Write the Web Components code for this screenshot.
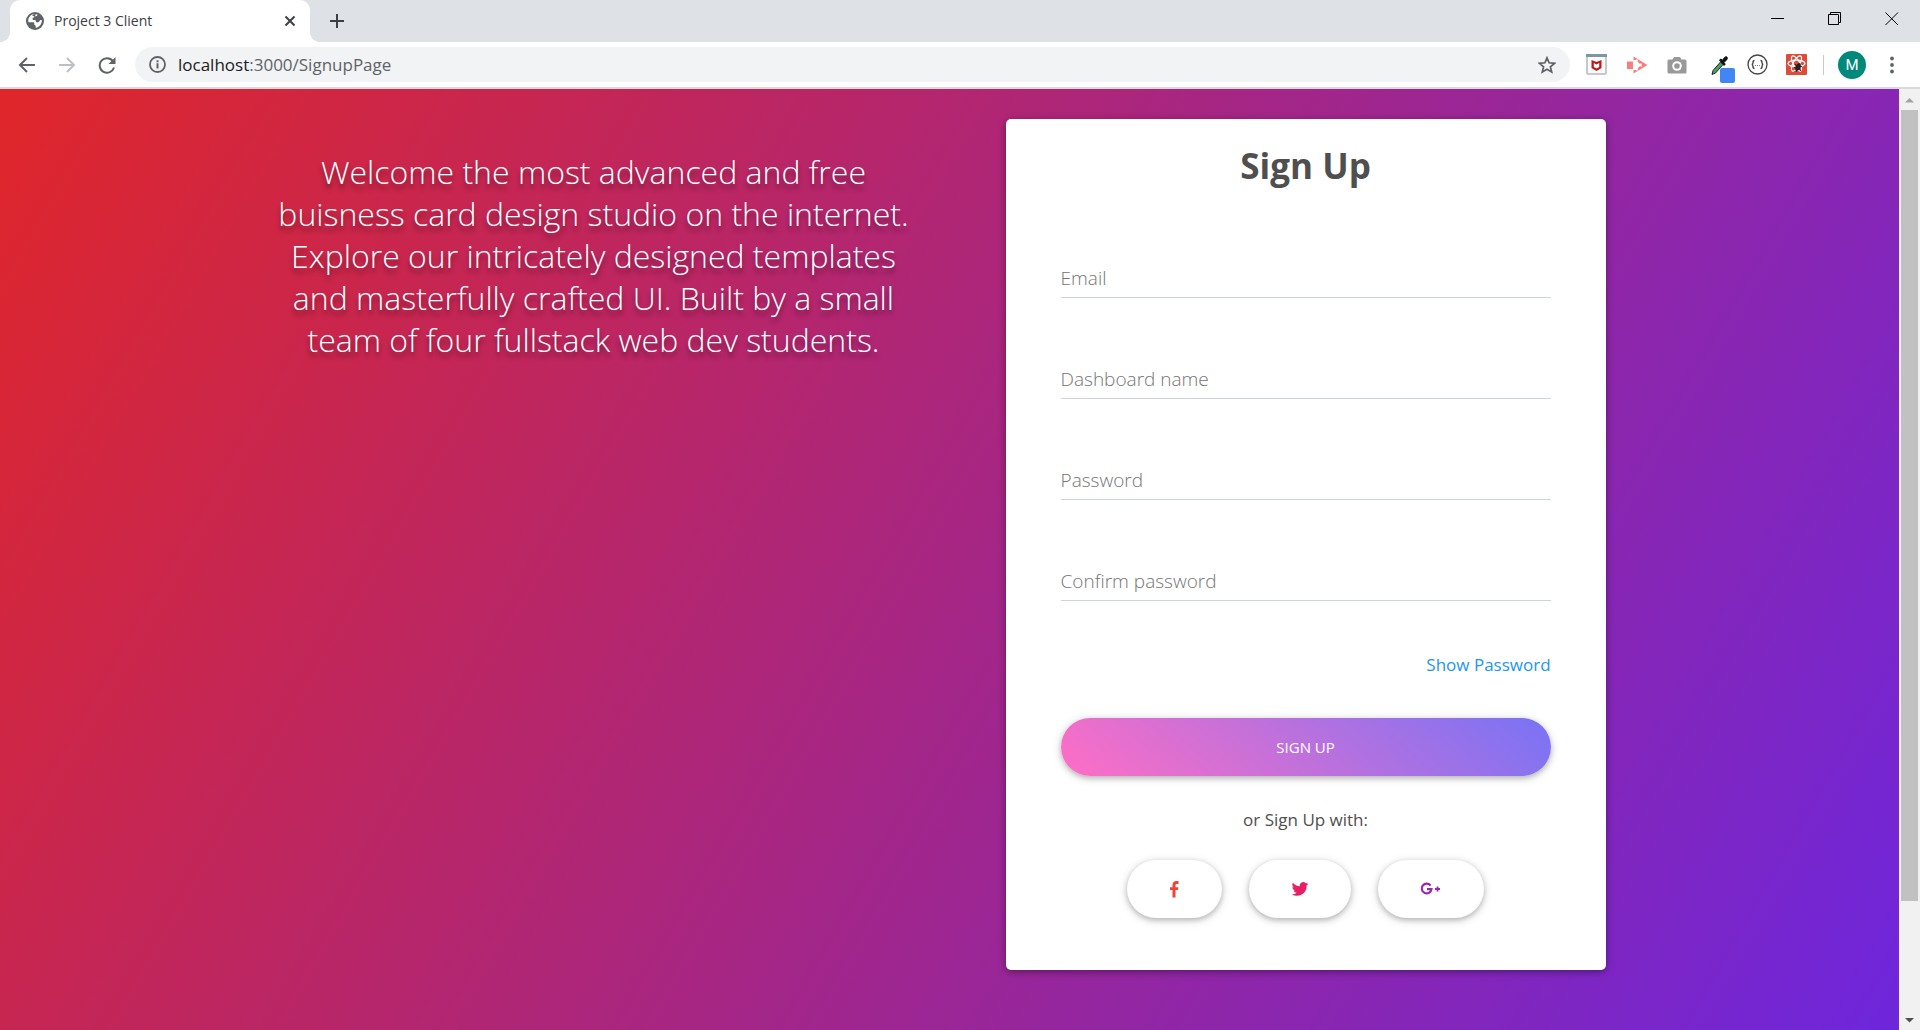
<!DOCTYPE html>
<html lang="en">
<head>
<meta charset="utf-8">
<title>Project 3 Client</title>
<style>
  html, body { margin: 0; height: 100%; }
  body { font-family: "Open Sans", "Noto Sans", sans-serif; overflow: hidden; }
</style>
</head>
<body>
<browser-window>
  <browser-tab slot="tab" title="Project 3 Client"></browser-tab>
  <address-bar slot="toolbar"></address-bar>
  <signup-page>
    <span slot="intro">Welcome the most advanced and free buisness card design studio on the internet. Explore our intricately designed templates and masterfully crafted UI. Built by a small team of four fullstack web dev students.</span>
    <signup-card slot="card" heading="Sign Up">
      <form-field label="Email" type="email"></form-field>
      <form-field label="Dashboard name" type="text"></form-field>
      <form-field label="Password" type="password"></form-field>
      <form-field label="Confirm password" type="password"></form-field>
    </signup-card>
  </signup-page>
</browser-window>

<script>
const define = (name, markup, setup) => customElements.define(name, class extends HTMLElement {
  constructor() {
    super();
    this.attachShadow({ mode: 'open' }).innerHTML = markup;
  }
  connectedCallback() { if (setup) setup(this, this.shadowRoot); }
});

define('browser-window', `
<style>
  :host { display: flex; flex-direction: column; height: 100vh; }
  .strip { display: flex; align-items: stretch; height: 42px; padding-left: 10px; background: #dee1e6; flex: none; }
  .strip button, .caption button { border: 0; padding: 0; background: none; display: grid; place-items: center; }
  .add { width: 54px; height: 42px; }
  .caption { display: flex; margin-left: auto; }
  .caption button { width: 57px; height: 37px; }
  .view { display: flex; flex: 1; min-height: 0; }
  ::slotted(signup-page) { flex: 1; min-width: 0; }
</style>
<div class="strip">
  <slot name="tab"></slot>
  <button class="add" aria-label="New tab"><svg width="16" height="16" viewBox="0 0 16 16" stroke="#3c4043" stroke-width="2"><path d="M8 1v14M1 8h14"/></svg></button>
  <div class="caption">
    <button aria-label="Minimize"><svg width="14" height="14" viewBox="0 0 14 14"><path d="M0 6.500h13" stroke="#000"/></svg></button>
    <button aria-label="Restore"><svg width="14" height="14" viewBox="0 0 14 14" fill="none" stroke="#000"><path d="M.5 2.500h10v10H.5zM2.500 2.500v-2h10v10h-2"/></svg></button>
    <button aria-label="Close"><svg width="14" height="14" viewBox="0 0 14 14" fill="none" stroke="#000"><path d="M.5.5l12.500 12.500M13 .5L.5 13"/></svg></button>
  </div>
</div>
<slot name="toolbar"></slot>
<div class="view"><slot></slot><scroll-track></scroll-track></div>
`);

define('browser-tab', `
<style>
  :host { display: flex; align-items: center; box-sizing: border-box; position: relative; width: 300px; padding: 0 14px 0 16px; background: #fff; border-radius: 10px 10px 0 0; }
  :host::before, :host::after { content: ""; position: absolute; bottom: 0; width: 10px; height: 10px; }
  :host::before { right: 100%; background: radial-gradient(circle at 0 0, transparent 10px, #fff 10px); }
  :host::after { left: 100%; background: radial-gradient(circle at 100% 0, transparent 10px, #fff 10px); }
  span { flex: 1; margin-left: 10px; font-size: 14px; line-height: 20px; color: #3c4043; }
  button { border: 0; padding: 0; background: none; width: 12px; height: 12px; display: block; }
  svg { display: block; }
</style>
<svg width="18" height="18" viewBox="0 0 18 18"><circle cx="9" cy="9" r="9" fill="#5f6368"/><path fill="#fff" d="M11.500 2.500c-.2 1.500-1.400 1.800-3 1.800-.8 0-.6 1.300-1.300 1.700-.8.400-1 .7-.5 1.500.6.900 2 .2 2.700.8.700.7.300 1.700 1.200 2 .9.300 2.800-.2 3-1.300.2-1 1.400-1 2.300-.8-.1 4-2.600 7-6.200 7.700v-1.500c0-.8-.6-1.500-1.400-1.700V11.500c0-.8-.6-1.300-1.400-1.300H2.500c-1-4 1.500-7.300 5-8.200z"/><path fill="#5f6368" d="M6 3.500l2-1.500 2 .5-1.500 2z"/></svg>
<span></span>
<button aria-label="Close tab"><svg width="12" height="12" viewBox="0 0 12 12" stroke="#3c4043" stroke-width="2"><path d="M1.500 1.500l9 9M10.500 1.500l-9 9"/></svg></button>
`, (el, root) => { root.querySelector('span').textContent = el.title; });

define('address-bar', `
<style>
  :host { display: flex; align-items: center; flex: none; box-sizing: border-box; height: 47px; padding: 0 15px 0 12px; background: #fff; border-bottom: 2px solid #d8dade; }
  button { border: 0; padding: 0; background: none; display: grid; place-items: center; flex: none; }
  svg { display: block; }
  .nav { display: flex; gap: 10px; margin-right: 13px; }
  .nav button { width: 30px; height: 30px; }
  .omni { display: flex; align-items: center; flex: 1; height: 35px; border-radius: 18px; background: #f1f3f4; padding: 0 14px; box-sizing: border-box; }
  .url { flex: 1; margin-left: 12px; font-size: 17px; line-height: 24px; color: #5f6368; }
  .url b { font-weight: 400; color: #202124; }
  .ext { display: flex; align-items: center; gap: 18px; margin-left: 16px; }
  .ext button { width: 22px; height: 36px; }
  .sep { width: 1px; height: 20px; background: #c8cacd; margin-left: 15px; }
  .avatar { width: 28px; height: 28px; border-radius: 50%; background: #00897b; color: #fff; font: 15px/28px Roboto, sans-serif; margin: 0 13px 0 14px; }
  .menu { width: 26px; height: 30px; }
</style>
<div class="nav">
  <button aria-label="Back"><svg width="18" height="18" viewBox="0 0 18 18" fill="none" stroke="#5f6368" stroke-width="2"><path d="M17 9H2M9 2L2 9l7 7"/></svg></button>
  <button aria-label="Forward"><svg width="18" height="18" viewBox="0 0 18 18" fill="none" stroke="#bdc1c6" stroke-width="2"><path d="M1 9h15M9 2l7 7-7 7"/></svg></button>
  <button aria-label="Reload"><svg width="20" height="18" viewBox="0 0 20 18"><path d="M15.800 5A7.300 7.300 0 1 0 17 11.500" fill="none" stroke="#5f6368" stroke-width="2"/><path d="M18.500 1v7h-7z" fill="#5f6368"/></svg></button>
</div>
<div class="omni">
  <svg width="17" height="17" viewBox="0 0 17 17"><circle cx="8.500" cy="8.500" r="7.500" fill="none" stroke="#5f6368" stroke-width="1.800"/><path d="M8.500 4.200v2M8.500 7.300v5.200" stroke="#5f6368" stroke-width="2"/></svg>
  <div class="url"><b>localhost</b>:3000/SignupPage</div>
  <button aria-label="Bookmark"><svg width="18" height="18" viewBox="0 0 18 18"><path d="M9 1.800l2.100 5 5.400.5-4.100 3.500 1.300 5.300L9 13.300l-4.700 2.800 1.300-5.300L1.500 7.300l5.400-.5z" fill="none" stroke="#5f6368" stroke-width="1.700"/></svg></button>
</div>
<div class="ext">
  <button aria-label="WebAdvisor"><svg width="22" height="22" viewBox="0 0 22 22"><rect x="1" y="1" width="19" height="19" rx="1" fill="#fafafa" stroke="#b5b9bd" stroke-width="1.500"/><path d="M0 0h21v3H0z" fill="#7d96a3"/><path d="M5.500 6l5 2 5-2v8l-5 3-5-3z" fill="#c01818"/><path d="M7.800 9l2.700 1.400L13.200 9v4l-2.700 1.500L7.800 13z" fill="#fff"/></svg></button>
  <button aria-label="Screen recorder"><svg width="21" height="18" viewBox="0 0 21 18"><path d="M0 5.500h6v7.500H0z" fill="#fa7d7d"/><path d="M6.500.5L20.500 9l-14 8.500V14H9l5-5-5-5H6.500z" fill="#fa7d7d"/><path d="M7.500 5.500L12.500 9l-5 3.500z" fill="#fff"/><path d="M9 4l2 .8M9 14l2-.8M14 7.500v3" stroke="#fff" stroke-width="1.500"/></svg></button>
  <button aria-label="Camera"><svg width="20" height="18" viewBox="0 0 20 18"><path d="M7 1h6l1.500 2.500H18a1.500 1.500 0 0 1 1.500 1.500v11a1.500 1.500 0 0 1-1.500 1.500H2A1.500 1.500 0 0 1 .5 16V5A1.500 1.500 0 0 1 2 3.500h3.500z" fill="#999"/><circle cx="10" cy="10" r="4.800" fill="#fff"/><circle cx="10" cy="10" r="2.800" fill="#999"/></svg></button>
  <button aria-label="Color picker"><svg width="29" height="36" viewBox="-5 -8 29 36"><path d="M1 19.500l1-4 7.500-8.500 2.500 2.500-7.500 8.500z" fill="#49a35a" stroke="#223" stroke-width="1"/><path d="M8.500 5l1.500-1 1.500 1.200 2-2.700c2-2 4 0 2 2.500L13 7.500l1.200 1.700-1.200 1.300z" fill="#111" stroke="#111"/><rect x="9" y="13" width="15" height="15" rx="2" fill="#4285f4"/></svg></button>
  <button aria-label="JSON formatter"><svg width="21" height="21" viewBox="0 0 21 21" fill="none" stroke="#444"><circle cx="10.500" cy="10.500" r="9.500" stroke-width="1.300"/><path d="M7.500 6.500c-1.500 0-1.500.8-1.500 2s-.3 2-1.300 2c1 0 1.300.8 1.300 2s0 2 1.500 2M13.500 6.500c1.500 0 1.500.8 1.500 2s.3 2 1.300 2c-1 0-1.300.8-1.300 2s0 2-1.500 2" stroke-width="1.400"/><path d="M8 11.500h1M10 11.500h1M12 11.500h1" stroke="#888"/></svg></button>
  <button aria-label="React tools"><svg width="22" height="22" viewBox="0 0 22 22"><rect width="21" height="21" rx="1" fill="#dd4b39"/><g fill="none" stroke="#fff" stroke-width="1.200"><ellipse cx="10.500" cy="9.500" rx="8.500" ry="3.300"/><ellipse cx="10.500" cy="9.500" rx="8.500" ry="3.300" transform="rotate(60 10.500 9.500)"/><ellipse cx="10.500" cy="9.500" rx="8.500" ry="3.300" transform="rotate(120 10.500 9.500)"/></g><ellipse cx="12" cy="13" rx="2.500" ry="4" transform="rotate(25 12 13)" fill="#222"/><path d="M9 10l6 7M8 13.500l8-1M10 18l4-9" stroke="#222"/></svg></button>
</div>
<div class="sep"></div>
<button class="avatar" aria-label="Profile">M</button>
<button class="menu" aria-label="Menu"><svg width="4" height="18" viewBox="0 0 4 18" fill="#5f6368"><circle cx="2" cy="2.500" r="1.900"/><circle cx="2" cy="9" r="1.900"/><circle cx="2" cy="15.500" r="1.900"/></svg></button>
`);

define('scroll-track', `
<style>
  :host { display: flex; flex-direction: column; align-items: center; width: 21px; flex: none; background: #f1f1f1; }
  svg { flex: none; }
  .run { flex: 1; width: 17px; }
  .thumb { height: 88%; background: #c1c1c1; }
</style>
<svg width="21" height="21" viewBox="0 0 21 21"><path d="M6 13.500l4.500-4.500 4.500 4.500z" fill="#a3a3a3"/></svg>
<div class="run"><div class="thumb"></div></div>
<svg width="21" height="21" viewBox="0 0 21 21"><path d="M6 9l4.500 4.500L15 9z" fill="#505050"/></svg>
`);

define('signup-page', `
<style>
  :host { display: block; overflow: hidden; background: linear-gradient(120deg, #e0262a 0%, #6e26dc 100%); }
  .columns { display: grid; grid-template-columns: 1fr 1fr; width: 75%; margin: 0 auto; padding-top: 30px; }
  p { margin: 32px auto 0; max-width: 650px; font-size: 32px; font-weight: 300; line-height: 42px; text-align: center; color: #fff; text-shadow: 0 5px 5px rgba(0, 0, 0, .4); }
  .card { display: flex; justify-content: center; align-items: flex-start; }
</style>
<div class="columns">
  <p><slot name="intro"></slot></p>
  <div class="card"><slot name="card"></slot></div>
</div>
`);

define('signup-card', `
<style>
  :host { display: block; box-sizing: border-box; width: 600px; padding: 23px 55px 52px; background: #fff; border-radius: 5px; color: #4f4f4f; box-shadow: 0 2px 5px rgba(0, 0, 0, .16), 0 2px 10px rgba(0, 0, 0, .24); }
  h3 { margin: 0; font-size: 35px; line-height: 48px; font-weight: 700; text-align: center; }
  .fields { display: grid; gap: 65px; padding-top: 72px; }
  .options { display: flex; justify-content: flex-end; padding-top: 52px; }
  a { font-size: 17px; line-height: 24px; color: #2196f3; text-decoration: none; }
  button { border: 0; border-radius: 29px; height: 58px; box-shadow: 0 2px 5px rgba(0, 0, 0, .16), 0 2px 10px rgba(0, 0, 0, .2); }
  .submit { display: block; width: 100%; margin-top: 41px; background: linear-gradient(40deg, #ff6ec4, #7873f5); color: #fff; font: 400 15px/24px "Open Sans", sans-serif; }
  p { margin: 32px 0 28px; font-size: 17px; line-height: 24px; text-align: center; }
  .social { display: flex; justify-content: center; gap: 27px; }
  .social button { display: grid; place-items: center; background: #fff; padding: 0 42px; }
</style>
<form>
  <h3></h3>
  <div class="fields"><slot></slot></div>
  <div class="options"><a href="#show">Show Password</a></div>
  <button class="submit" type="button">SIGN UP</button>
  <p>or Sign Up with:</p>
  <div class="social">
    <button type="button" aria-label="Facebook"><svg width="11" height="17" viewBox="0 0 11 17" fill="#f44336"><path d="M9.500.2v2.700H8C6.800 2.900 6.500 3.500 6.500 4.300v1.900h2.900L9 9H6.500v7.500h-3V9H1V6.200h2.500V4C3.500 1.500 5 .1 7.300.1c1 0 1.900.1 2.200.1z"/></svg></button>
    <button type="button" aria-label="Twitter"><svg width="18" height="16" viewBox="0 0 26 22" fill="#e91e63"><path d="M25 3.400a10 10 0 0 1-2.800.8A5 5 0 0 0 24.300 1.500a10 10 0 0 1-3.100 1.200 4.900 4.900 0 0 0-8.400 4.500A14 14 0 0 1 2.700 2.100a4.900 4.900 0 0 0 1.500 6.500 5 5 0 0 1-2.200-.6 4.900 4.900 0 0 0 3.900 4.900 5 5 0 0 1-2.200.1 4.900 4.900 0 0 0 4.600 3.400A9.900 9.900 0 0 1 1 18.500a14 14 0 0 0 21.500-12.400A10 10 0 0 0 25 3.400z"/></svg></button>
    <button type="button" aria-label="Google Plus"><svg width="22" height="14" viewBox="0 0 22 14" fill="none" stroke="#9c27b0"><path d="M10.500 3.500A4.900 4.900 0 1 0 11.500 7.200H7" stroke-width="2.200"/><path d="M17.500 4.500v5M15 7h5" stroke-width="1.800"/></svg></button>
  </div>
</form>
`, (el, root) => { root.querySelector('h3').textContent = el.getAttribute('heading'); });

define('form-field', `
<style>
  :host { display: grid; }
  label, input { grid-area: 1 / 1; }
  label { padding-top: 4px; font-size: 19px; line-height: 24px; font-weight: 300; color: #757575; pointer-events: none; }
  input { box-sizing: border-box; width: 100%; height: 36px; border: 0; border-bottom: 1px solid #ced4da; background: none; outline: 0; padding: 4px 0; font: 300 19px/24px "Open Sans", sans-serif; }
</style>
<label for="control"></label><input id="control">
`, (el, root) => {
  root.querySelector('label').textContent = el.getAttribute('label');
  root.querySelector('input').type = el.getAttribute('type');
});
</script>
</body>
</html>
